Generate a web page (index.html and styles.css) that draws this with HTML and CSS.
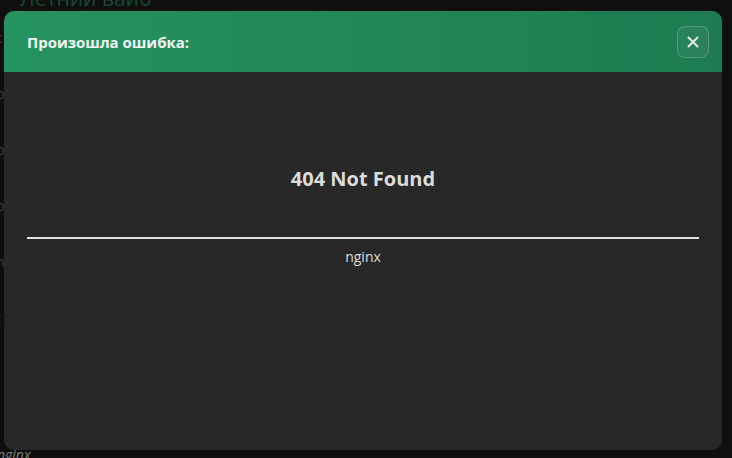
FILE: index.html
```html
<!DOCTYPE html>
<html lang="ru">
<head>
    <meta charset="UTF-8">
    <meta name="viewport" content="width=device-width, initial-scale=1.0">
    <title>Ошибка</title>
    <link rel="stylesheet" href="styles.css">
</head>
<body>
    <div class="page">
        <h2 class="page-title">Летний вайб</h2>
        <p class="page-line">с</p>
        <p class="page-line">о</p>
        <p class="page-line">о</p>
        <p class="page-line">о</p>
        <p class="page-line">n</p>
        <p class="page-line">t</p>
        <p class="page-foot">nginx.</p>
    </div>

    <div class="modal">
        <div class="modal-header">
            <h3 class="modal-title">Произошла ошибка:</h3>
            <button class="close-button" aria-label="Закрыть">
                <svg width="12" height="12" viewBox="0 0 12 12">
                    <path d="M1.5 1.5 L10.5 10.5 M10.5 1.5 L1.5 10.5" stroke="#e3eee7" stroke-width="2" stroke-linecap="round"/>
                </svg>
            </button>
        </div>
        <div class="modal-body">
            <h1 class="error-code">404 Not Found</h1>
            <hr class="divider">
            <div class="server">nginx</div>
        </div>
    </div>
</body>
</html>
```

FILE: styles.css
```css
body {
    background-color: #0f0f0f;
    font-family: "Open Sans", Arial, sans-serif;
    margin: 0;
    height: 100vh;
    overflow: hidden;
    position: relative;
}

.page {
    color: #333;
}

.page-title {
    font-size: 21px;
    font-weight: 400;
    color: #154a30;
    margin: -14px 0 0 20px;
    line-height: 24px;
}

.page-line {
    margin: 0 0 0 -4px;
    font-size: 14px;
    line-height: 56px;
    color: #3c3c3c;
}

.page-foot {
    margin: 0;
    position: absolute;
    left: -3px;
    bottom: -6px;
    font-size: 14px;
    font-style: italic;
    color: #808080;
}

.modal {
    position: absolute;
    top: 11px;
    left: 4px;
    width: 718px;
    height: 439px;
    border-radius: 10px;
    overflow: hidden;
    background-color: #282828;
    display: flex;
    flex-direction: column;
}

.modal-header {
    height: 61px;
    background-image: linear-gradient(90deg, #25935f, #1e7b51);
    display: flex;
    align-items: center;
    justify-content: space-between;
    padding: 0 13px 0 23px;
    flex-shrink: 0;
}

.modal-title {
    margin: 0;
    font-size: 15px;
    font-weight: 700;
    color: #f4f7f5;
}

.close-button {
    width: 32px;
    height: 32px;
    border-radius: 8px;
    border: 1px solid rgba(255, 255, 255, 0.2);
    background-color: rgba(255, 255, 255, 0.05);
    display: flex;
    align-items: center;
    justify-content: center;
    padding: 0;
    cursor: pointer;
}

.modal-body {
    flex: 1;
    padding: 0 23px;
    color: #dcdcdc;
    text-align: center;
}

.error-code {
    font-size: 20px;
    font-weight: 700;
    margin: 93px 0 0;
    line-height: 27px;
}

.divider {
    border: none;
    height: 2px;
    background-color: #e0e0e0;
    margin: 45px 0 0;
}

.server {
    font-size: 14px;
    margin-top: 8px;
    line-height: 19px;
}
```
